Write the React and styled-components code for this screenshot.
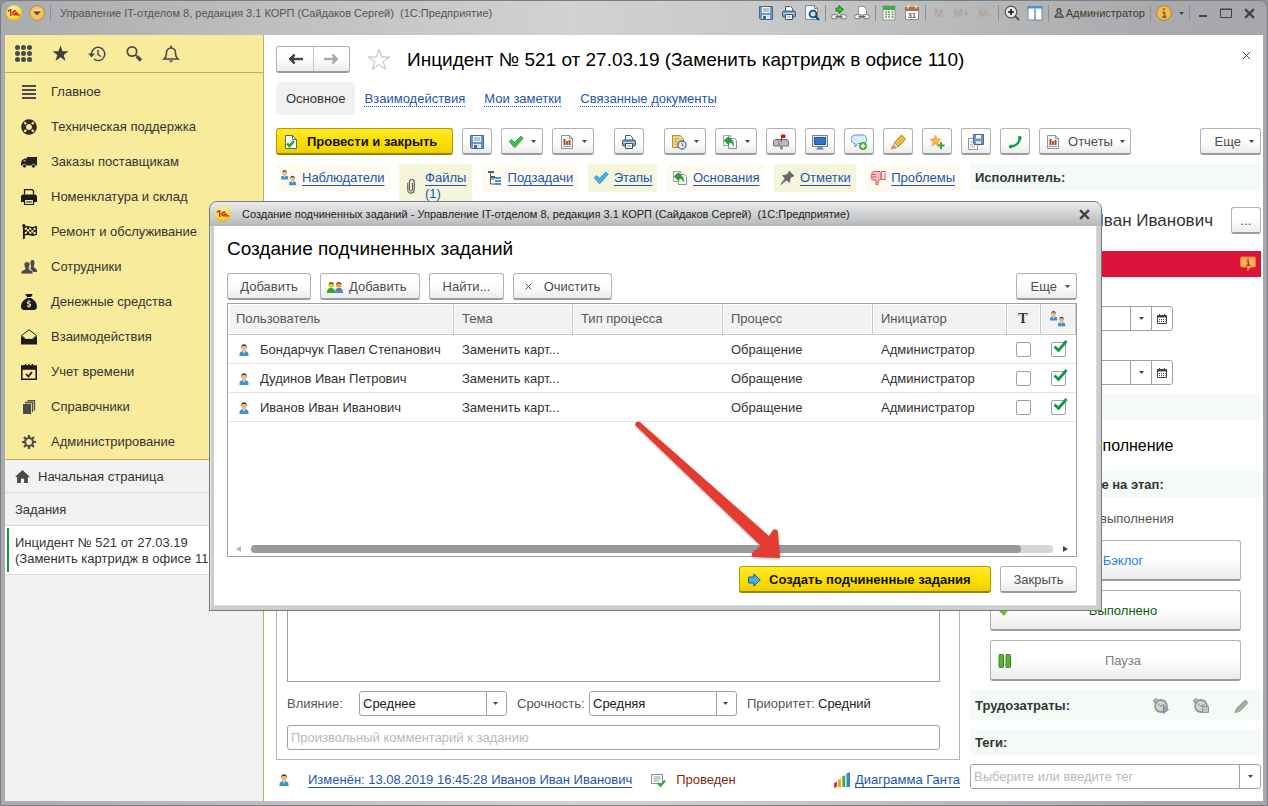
import React from "react";
import styled, { createGlobalStyle, css } from "styled-components";
import { FaLifeRing, FaFlagCheckered } from "react-icons/fa";
import { FaSackDollar } from "react-icons/fa6";

const GlobalStyle = createGlobalStyle`
  * {
    box-sizing: border-box;
  }
  body {
    margin: 0;
    background: #8d9093;
    color: #333;
    font-family: "Liberation Sans", Arial, sans-serif;
    font-size: 13px;
    line-height: 16px;
  }
  button,
  input,
  select,
  textarea {
    font: inherit;
    color: inherit;
    margin: 0;
  }
  h1,
  h2,
  p {
    margin: 0;
    font-weight: normal;
  }
  svg {
    display: block;
    flex: none;
  }
`;

/* ---------- icons ---------- */

const Icon = ({ size = 16, box = 16, children }) => (
  <svg width={size} height={size} viewBox={`0 0 ${box} ${box}`} fill="none" aria-hidden="true">
    {children}
  </svg>
);

const Logo = () => (
  <svg width="16" height="16" viewBox="0 0 16 16" aria-hidden="true">
    <defs>
      <radialGradient id="logo" cx="0.45" cy="0.3" r="0.7">
        <stop offset="0" stopColor="#fffbb0" />
        <stop offset="0.7" stopColor="#fbe32c" />
        <stop offset="1" stopColor="#e0b21a" />
      </radialGradient>
    </defs>
    <circle cx="8" cy="8" r="7.7" fill="url(#logo)" />
    <path d="M1.8 6.4L3.6 5h1.2v6M10.3 6.6A2 2 0 1 0 8.3 9.9H14M8.3 8.3H12" stroke="#d8151b" strokeWidth="1.4" fill="none" />
  </svg>
);

const DropBall = () => (
  <svg width="16" height="16" viewBox="0 0 16 16" aria-hidden="true">
    <circle cx="8" cy="8" r="7.4" fill="#f6c062" stroke="#b98a45" />
    <path d="M3 6a5.5 4 0 0 1 10 0z" fill="#fbd995" />
    <path d="M4.3 6.6h7.4L8 10.4z" fill="#5a4a36" />
  </svg>
);

const Caret = ({ color = "#444" }) => (
  <svg width="5" height="3" viewBox="0 0 5 3" aria-hidden="true">
    <path d="M0 0h5L2.5 3z" fill={color} />
  </svg>
);

const FloppyIcon = () => (
  <Icon>
    <path d="M1.5 1.5h13v13h-12l-1-1z" fill="#6f97c1" stroke="#44688f" />
    <path d="M4 2h8v6H4z" fill="#eef4fa" />
    <path d="M5 4h6M5 6h6" stroke="#7b93ad" />
    <path d="M4 10h8v4H4z" fill="#dfe5ea" />
    <path d="M5 11h3v3H5z" fill="#43678e" />
  </Icon>
);

const PrinterIcon = () => (
  <Icon>
    <path d="M4.5 6V1.5h5l2 2V6" fill="#fff" stroke="#3d5f84" />
    <rect x="1.5" y="6" width="13" height="6" rx="1.5" fill="#7d9cbd" stroke="#355778" />
    <path d="M2 8.500h12" stroke="#c2d3e3" />
    <path d="M4.5 9.5h7v5h-7z" fill="#fff" stroke="#355778" />
    <path d="M6 12h4" stroke="#7b93ad" />
  </Icon>
);

const PreviewIcon = () => (
  <Icon>
    <path d="M1.5.5h9l3 3v11h-12z" fill="#f4f7fa" stroke="#7f8d99" />
    <path d="M10.5.5v3h3" stroke="#7f8d99" />
    <circle cx="9" cy="9" r="3.4" fill="#cfe3ef" stroke="#0f5079" strokeWidth="1.8" />
    <path d="M11.5 11.5L15 15" stroke="#0f5079" strokeWidth="2.2" />
  </Icon>
);

const ChainIcon = ({ arrow }) => (
  <Icon>
    {arrow ? (
      <path d="M5 3h3V.5L12.500 4.500 8 8.500V6H5z" fill="#3bbf2e" stroke="#1d7d18" />
    ) : (
      <path d="M4.5 9V1.5h5l3 3V9" fill="#fff" stroke="#8a949c" />
    )}
    <rect x=".7" y="9.7" width="6" height="4" rx="1.5" fill="#f4f4f4" stroke="#777" />
    <rect x="9.3" y="9.7" width="6" height="4" rx="1.5" fill="#f4f4f4" stroke="#777" />
    <path d="M4.5 11.7h7" stroke="#666" strokeWidth="1.5" />
  </Icon>
);

const CalcIcon = () => (
  <Icon>
    <path d="M2 1h12v14H2z" fill="#f4f6f4" stroke="#8a998a" />
    <path d="M2 1h12v4H2z" fill="#3fae49" />
    <path d="M4 7h2M7 7h2M4 9.5h2M7 9.5h2M4 12h2M7 12h2" stroke="#7d8f7d" strokeWidth="1.5" />
    <path d="M10.5 7h2M10.5 9.5h2" stroke="#3fae49" strokeWidth="1.5" />
    <path d="M10.5 12h2" stroke="#d44" strokeWidth="1.5" />
  </Icon>
);

const CalendarIcon = () => (
  <Icon>
    <path d="M1.5 2.5h13v12h-13z" fill="#fff" stroke="#8a8a95" />
    <path d="M1 2h14v4H1z" fill="#bb6a35" />
    <path d="M4 .5v3M12 .5v3" stroke="#eed" strokeWidth="1.5" />
    <text x="8" y="13" textAnchor="middle" fontSize="7" fontWeight="bold" fill="#556">31</text>
  </Icon>
);

const ZoomPlusIcon = () => (
  <Icon>
    <circle cx="7" cy="7" r="5.8" fill="#e6e8ea" stroke="#555" strokeWidth="1.2" />
    <path d="M4 7h6M7 4v6" stroke="#111" strokeWidth="1.6" />
    <path d="M11 11l4 4" stroke="#555" strokeWidth="2" />
  </Icon>
);

const ColumnsIcon = () => (
  <Icon>
    <path d="M1 2h14v13H1z" fill="#fff" stroke="#7a8896" />
    <path d="M.5 1h15v2.500H.5z" fill="#3c94e0" />
    <path d="M8 4v11" stroke="#7a8896" strokeWidth="1.5" />
  </Icon>
);

const UserOutline = () => (
  <Icon size={10} box={10}>
    <path d="M5 .6c2.7 0 2.2 3.4 1 4.6 0 1.3 3 1 3 4H1c0-3 3-2.7 3-4C2.8 4 2.3.6 5 .6z" fill="#9a9a9a" stroke="#444" strokeWidth="1.3" />
  </Icon>
);

const InfoBall = () => (
  <Icon>
    <circle cx="8" cy="8" r="7.4" fill="#f4b84f" stroke="#b98328" />
    <path d="M8 3.2v1.900M6.5 7.300h2v4.500M6.3 12h4" stroke="#6b675c" strokeWidth="1.8" />
  </Icon>
);

const DocCheckIcon = () => (
  <Icon>
    <path d="M2.5 1.500h7l4 4v9h-11z" fill="#fff" stroke="#4a6a86" />
    <path d="M9.500 1.500v4h4" stroke="#4a6a86" />
    <path d="M4 9.500l2.500 2.500 4.500-5" stroke="#2fa332" strokeWidth="2.6" />
  </Icon>
);

const CheckPath = "M1.5 8.5L4 6.2l3.300 3.300L14.5 2.5l2.5 2.300L7.500 15.500z";

const GreenCheck = () => (
  <Icon box={18}>
    <path d={CheckPath} fill="#3fc04b" stroke="#25913a" />
  </Icon>
);

const BlueCheck = () => (
  <Icon box={18}>
    <path d={CheckPath} fill="#3fb3ef" stroke="#1f8bcb" />
  </Icon>
);

const ReportIcon = () => (
  <Icon>
    <path d="M2.5 1.500h8l3 3v10h-11z" fill="#f8fafc" stroke="#8497a9" />
    <path d="M10.500 1.500v3h3" stroke="#8497a9" />
    <path d="M5.500 5v6M10.500 6v5" stroke="#dd2c22" strokeWidth="2" />
    <path d="M8 7v4" stroke="#31a038" strokeWidth="2" />
    <path d="M4 12.500h8" stroke="#999" />
  </Icon>
);

const DocClockIcon = () => (
  <Icon>
    <path d="M1.5 1.500h8l3 3v9h-11z" fill="#f2d489" stroke="#b8903f" />
    <path d="M3 5h5M3 7.500h4M3 10h3" stroke="#c9a454" />
    <circle cx="11" cy="11" r="4" fill="#eaf2fa" stroke="#47719b" strokeWidth="1.3" />
    <path d="M11 8.500V11l2 1" stroke="#d33" />
  </Icon>
);

const BasisIcon = () => (
  <Icon>
    <path d="M1.5 1.500h7v10h-7z" fill="#f6f8fa" stroke="#9aa7b3" />
    <path d="M6.5 4.500h6l2 2v8h-8z" fill="#f2f6fa" stroke="#8094a6" />
    <path d="M2 6.500l5-4v2.200c3 0 4.500 3 4.500 6.800-1-2.500-2.500-3-4.500-3v2.300z" fill="#2f9e35" stroke="#1c7424" strokeWidth=".6" />
  </Icon>
);

const MailboxIcon = () => (
  <Icon>
    <path d="M.5 12V8A2.500 2.500 0 0 1 3 5.500h10A2.500 2.500 0 0 1 15.500 8v4z" fill="#b8bdc1" stroke="#6f7478" />
    <path d="M6 12V8a2.500 2.500 0 0 0-2.500-2.500" stroke="#6f7478" />
    <path d="M7 12h3v3.500H7z" fill="#8d9296" />
    <path d="M8.500 8V1h3.500v2.500H9" fill="#e01b1b" stroke="#c31414" />
  </Icon>
);

const MonitorIcon = () => (
  <Icon>
    <path d="M.5 1.500h15v11H.5z" fill="#e6eaee" stroke="#74808c" />
    <path d="M2.500 3.500h11v7h-11z" fill="#2f74c9" stroke="#1f549a" />
    <path d="M6 13h4v1.500H6zM4 15h8" fill="#999" stroke="#74808c" />
  </Icon>
);

const ChatPlusIcon = () => (
  <Icon>
    <path d="M4.500 1h7a3.800 3.800 0 0 1 0 8.500H7L4 13V9.500A4 4 0 0 1 4.500 1z" fill="#d9ecfa" stroke="#4f94cc" />
    <circle cx="12" cy="12" r="3.700" fill="#5cb531" stroke="#3e8a1d" strokeWidth=".6" />
    <path d="M12 9.800v4.400M9.800 12h4.400" stroke="#fff" strokeWidth="1.3" />
  </Icon>
);

const MarkerIcon = () => (
  <Icon>
    <path d="M4.500 8.500l7-7.500 4 4-7 7.500z" fill="#f1bd3c" stroke="#a97722" />
    <path d="M4.500 8.500l4 4-2.500 1.300L3.200 11z" fill="#d9d9d9" stroke="#8d8d8d" strokeWidth=".7" />
    <path d="M3.200 11.300L5.700 14 1 15z" fill="#e3a52e" stroke="#a97722" strokeWidth=".6" />
  </Icon>
);

const StarPlusIcon = () => (
  <Icon>
    <path d="M6.500 1l1.600 3.800 4.100.4-3.100 2.700.9 4.100-3.500-2.200L3 12l.9-4.100L.8 5.200l4.100-.4z" fill="#f7b24c" stroke="#e69a31" strokeWidth=".6" />
    <path d="M12 8v7M8.500 11.500h7" stroke="#3da62b" strokeWidth="2" />
  </Icon>
);

const CopySaveIcon = () => (
  <Icon>
    <path d="M.5 4.500h9v11h-9z" fill="#fff" stroke="#8497a9" />
    <path d="M2 8h3M2 10.500h3M2 13h5" stroke="#9fb0bf" />
    <path d="M5.500.5h10v10h-9l-1-1z" fill="#6c96c3" stroke="#44688f" />
    <path d="M8 1h5v3.500H8z" fill="#eef4fa" />
    <path d="M8 7h5v3H8z" fill="#d5dde4" />
  </Icon>
);

const PhoneIcon = () => (
  <Icon>
    <path d="M13 3.500C13 8 9 12.500 3.500 12.500" stroke="#0b9a4a" strokeWidth="2.2" />
    <path d="M11 2.500q2.500-1 3.500.5l-.3 3-2.700.200zM2 12.700q0-1.500 1.500-2h2l.7 2.300q-2 1.800-4.200 1z" fill="#0b9a4a" />
  </Icon>
);

const PersonShape = ({ x = 0, y = 0 }) => (
  <>
    <path d={`M${x} ${y + 12}v-2c0-2 2-3 4.500-3s4.500 1 4.500 3v2z`} fill="#3b93c9" />
    <path d={`M${x + 3.5} ${y + 7}h2l-1 3z`} fill="#fff" />
    <ellipse cx={x + 4.5} cy={y + 4} rx="2.6" ry="3.4" fill="#eebb7d" />
    <path d={`M${x + 1.7} ${y + 4.2}C${x + 1} ${y - 1.2} ${x + 8} ${y - 1.2} ${x + 7.3} ${y + 4.2}L${x + 6.3} ${y + 2}H${x + 2.7}z`} fill="#4e3a28" />
  </>
);

const PersonIcon = () => (
  <Icon size={12} box={12}>
    <PersonShape x={1.5} y={0} />
  </Icon>
);

const PeopleIcon = () => (
  <svg width="16" height="16" viewBox="0 0 20 20" aria-hidden="true">
    <PersonShape x={0} y={0} />
    <PersonShape x={10} y={7} />
  </svg>
);

const GreenPeopleIcon = () => (
  <svg width="16" height="12" viewBox="0 0 16 12" aria-hidden="true">
    <path d="M0 12c0-4 1.500-5 4-5s4 1 4 5z" fill="#35a52f" />
    <path d="M8 12c0-4 1.500-5 4-5s4 1 4 5z" fill="#3a93dc" />
    <path d="M10.500 7h3L12 11z" fill="#e8432c" />
    <circle cx="4.300" cy="3.800" r="2.900" fill="#e9c328" />
    <circle cx="11.800" cy="3.800" r="2.900" fill="#eaa046" />
    <path d="M1.500 3.500C2 0 6.500 0 7 3.500 5.500 2 3 2 1.500 3.500zM9 3.500c.5-3.500 5-3.500 5.500 0-1.500-1.500-4-1.500-5.500 0z" fill="#6d4a22" />
  </svg>
);

const ClipIcon = () => (
  <svg width="8" height="16" viewBox="0 0 8 16" fill="none" aria-hidden="true">
    <path d="M5.500 5v6.500a1.500 1.500 0 0 1-3 0V3.800a2.300 2.300 0 0 1 4.700 0V12a3.200 3.200 0 0 1-6.400 0V5" stroke="#555" strokeWidth="1.1" />
  </svg>
);

const TreeIcon = () => (
  <Icon>
    <path d="M1 1h6v2H1zM3 6h5v2H3z" fill="#4b5f70" />
    <path d="M3.500 3v11H8M3.500 9h4" stroke="#4b5f70" />
    <path d="M8 7h6v2H8zM8 10h6v2H8zM8 13h6v2H8z" fill="#4e93c6" />
  </Icon>
);

const PinIcon = () => (
  <Icon>
    <path d="M10 1l5 5-2 .5L11 8.500l-.5 4-3-2.500L2 14.500 6 8.500 3.500 5.500l4-.5L9.500 3z" fill="#6a6a6a" stroke="#4c4c4c" strokeWidth=".6" />
  </Icon>
);

const ThumbDownIcon = () => (
  <Icon>
    <path d="M3.500 1.500H10l1 1v6.500l-3 2v3.500H6V10H2.500L1 8.500 2 7 1 6l1-1.500-.5-1.500z" fill="#f8bcc0" stroke="#e0575f" />
    <path d="M2 4.500h4M2 7h4" stroke="#e0575f" />
    <path d="M11.500 1.500H15v8h-3.500z" fill="#fff" stroke="#e0575f" />
  </Icon>
);

const WarnBubble = () => (
  <Icon>
    <path d="M2 1h12q1.500 0 1.500 1.500v7Q15.500 11 14 11h-3.500L7.500 15v-4H2Q.5 11 .5 9.500v-7Q.5 1 2 1z" fill="#f9ae58" stroke="#e58325" />
    <path d="M8 2.500V4M6.500 5.500h2V9M6.300 9.200h4" stroke="#a8431a" strokeWidth="1.4" />
  </Icon>
);

const SmallCalendar = () => (
  <svg width="10" height="10" viewBox="0 0 10 10" fill="none" aria-hidden="true">
    <path d="M.5 2h9v7.500h-9z" stroke="#444" />
    <path d="M.5 1.500h9v1.500h-9zM2.500 0v2M7.500 0v2" fill="#444" stroke="#444" />
    <path d="M2 5.500h6.500M2 7.500h6.500" stroke="#444" strokeDasharray="1 1" />
  </svg>
);

const PauseIcon = () => (
  <svg width="14" height="14" viewBox="0 0 14 14" aria-hidden="true">
    <rect x="1" y=".5" width="4.500" height="13" rx="1" fill="#5ab534" stroke="#368420" />
    <rect x="8" y=".5" width="4.500" height="13" rx="1" fill="#5ab534" stroke="#368420" />
  </svg>
);

const DoneIcon = () => (
  <Icon size={12} box={14}>
    <path d="M1 6l3-3 3 3 4-5 2 2-6 9z" fill="#6cc616" stroke="#4f9f10" />
  </Icon>
);

const ClockIcon = ({ stop }) => (
  <Icon>
    <circle cx="3" cy="3" r="2.300" fill="#b9bab8" stroke="#999" />
    <circle cx="8" cy="8" r="6" fill="#d2d2d0" stroke="#989898" strokeWidth="1.8" />
    <path d="M5 5.500L8 8.500l3.500-2.500" stroke="#b06a6a" />
    {stop ? (
      <path d="M9.500 8.500h6v6h-6z" fill="#b4c2ce" stroke="#8497a7" />
    ) : (
      <path d="M10.500 7.500l5 4-5 4z" fill="#8fa5b8" stroke="#768b9e" />
    )}
  </Icon>
);

const PencilIcon = () => (
  <Icon>
    <path d="M2 14.500l1.500-4L11 3l3 3-7.500 7.500z" fill="#9ab59c" stroke="#8b9e8d" />
    <path d="M11 3l1.500-1.500 3 3L14 6z" fill="#a0a6ad" />
    <path d="M2 14.500l1.500-4 3 3z" fill="#c4a38c" />
  </Icon>
);

const ListCheckIcon = () => (
  <Icon>
    <path d="M1.500 2.500h11v9h-11z" fill="#fff" stroke="#7f8f9c" />
    <path d="M3.500 5h7M3.500 7h7M3.500 9h5" stroke="#8b9aa7" />
    <path d="M8 11l2.500 3L15 8.500" stroke="#36a838" strokeWidth="2" />
  </Icon>
);

const GanttIcon = () => (
  <Icon>
    <path d="M0 11l3-1.500V15l-3 1z" fill="#e23b2a" />
    <path d="M4 8l3-1.500V15H4z" fill="#f0a21f" />
    <path d="M8.300 4.500l3-1.500v12h-3z" fill="#3fae3a" />
    <path d="M12.500 1.500L16 0v15h-3.500z" fill="#3c83cf" />
  </Icon>
);

const BlueArrow = () => (
  <svg width="13" height="14" viewBox="0 0 13 14" aria-hidden="true">
    <path d="M.6 4h5.200V.9L12.200 7l-6.400 6.100V10H.6z" fill="#42aef0" stroke="#1d5f96" />
  </svg>
);

const GridIcon = () => (
  <Icon size={17} box={17}>
    {[2.500, 8.500, 14.500].map((y) => [2.500, 8.500, 14.500].map((x) => <circle key={`${x}-${y}`} cx={x} cy={y} r="2.500" fill="#4a4a4a" />))}
  </Icon>
);

const StarIcon = () => (
  <Icon size={17} box={17}>
    <path d="M8.500.5l2 5.700h6l-4.800 3.700 1.800 6-5-3.600-5 3.600 1.800-6L.5 6.200h6z" fill="#3f3f3f" />
  </Icon>
);

const HistoryIcon = () => (
  <Icon size={18} box={18}>
    <path d="M3.500 9a6.600 6.600 0 1 1 2.300 5" stroke="#4a4a4a" strokeWidth="1.5" />
    <path d="M0 8.500h7l-3.500 4z" fill="#4a4a4a" />
    <path d="M10 5v4.500l3 2" stroke="#4a4a4a" strokeWidth="1.5" />
  </Icon>
);

const SearchIcon = () => (
  <Icon size={18} box={18}>
    <circle cx="7" cy="6.500" r="4.700" stroke="#4a4a4a" strokeWidth="1.7" />
    <path d="M10.500 10l1.500 1.500" stroke="#4a4a4a" strokeWidth="1.7" />
    <path d="M12 11.500l4 4" stroke="#4a4a4a" strokeWidth="3.4" />
  </Icon>
);

const BellIcon = () => (
  <Icon size={18} box={18}>
    <path d="M2 14c2-1.500 2.500-3 2.500-6A4.500 4.500 0 0 1 9 3a4.500 4.500 0 0 1 4.500 5c0 3 .5 4.500 2.500 6z" stroke="#4a4a4a" strokeWidth="1.5" />
    <path d="M9 .8v2" stroke="#4a4a4a" strokeWidth="2" />
    <path d="M6.500 15.500h5L9 17.500z" fill="#4a4a4a" />
  </Icon>
);

const LinesIcon = () => (
  <Icon size={14} box={14}>
    <path d="M0 1h14M0 5h14M0 9h14M0 13h14" stroke="#4a4a4a" strokeWidth="2" />
  </Icon>
);

const TruckIcon = () => (
  <Icon>
    <path d="M6 3h10v8.500H0V9l1-3 3-1.500h2z" fill="#222" />
    <path d="M1.800 7l2.500-1v1.500z" fill="#f9eb9c" />
    <circle cx="3.500" cy="12" r="1.900" fill="#222" stroke="#f9eb9c" strokeWidth=".6" />
    <circle cx="12.500" cy="12" r="1.900" fill="#222" stroke="#f9eb9c" strokeWidth=".6" />
  </Icon>
);

const DarkPrinter = () => (
  <Icon>
    <path d="M3.500 5.500v-5H11l1.500 1.500v3.500" stroke="#1b1b1b" strokeWidth="1.3" />
    <path d="M1.500 5.500h13L16 7v6h-3v-2H3v2H0V7z" fill="#1b1b1b" />
    <path d="M3.500 10.500h9v5h-9z" fill="#f9eb9c" stroke="#1b1b1b" strokeWidth="1.2" />
    <path d="M5 13h6" stroke="#1b1b1b" />
  </Icon>
);

const StaffIcon = () => (
  <Icon>
    <path d="M9 9c2-.5 1-1.500.6-3C9 3.500 9.500 1 11.500 1S14 3.500 13 6.500c-.5 1.500 0 2 1 2.500s2 1.500 2 4h-4z" fill="#4a4a4a" />
    <path d="M0 15c0-3.500 1.500-3.500 3.500-4.500 1-.5.500-1.500 0-2.500C2.500 5 3 2.800 6 2.800S9.500 5 8.500 8c-.5 1-1 2 0 2.500 2 1 3.500 1 3.500 4.500z" fill="#4a4a4a" stroke="#f9eb9c" strokeWidth=".8" />
  </Icon>
);

const EnvelopeIcon = () => (
  <Icon>
    <path d="M.5 6.500L8 .8l7.500 5.700L11 10.500H5z" stroke="#1b1b1b" />
    <path d="M0 7l5.500 4L8 9.500l2.500 1.500L16 7v8.500H0z" fill="#1b1b1b" />
  </Icon>
);

const CalendarCheck = () => (
  <Icon>
    <path d="M.8 2.500h14.400v12.700H.8z" stroke="#1b1b1b" strokeWidth="1.6" />
    <path d="M1 2h14v3H1zM4.500 0v3M8 0v3M11.500 0v3" fill="#1b1b1b" stroke="#1b1b1b" strokeWidth="1.3" />
    <path d="M5 10l2.500 2.500L11 8" stroke="#1b1b1b" strokeWidth="1.7" />
  </Icon>
);

const BooksIcon = () => (
  <Icon size={14} box={14}>
    <path d="M1 4h8v10H1z" fill="#4a4a4a" />
    <path d="M3 2.500h7.500V12M5.500.7h7V10.500" stroke="#4a4a4a" strokeWidth="1.3" />
  </Icon>
);

const GearIcon = () => (
  <Icon size={14} box={14}>
    <path d="M7 0v14M0 7h14M2 2l10 10M12 2L2 12" stroke="#4a4a4a" strokeWidth="2.2" />
    <circle cx="7" cy="7" r="3.900" fill="#f9eb9c" stroke="#4a4a4a" strokeWidth="2" />
  </Icon>
);

const HomeIcon = () => (
  <Icon size={15} box={14}>
    <path d="M7 1l7 6.500h-2V13H8.500V9h-3v4H2V7.500H0z" fill="#4a4a4a" />
  </Icon>
);

const StarOutline = () => (
  <Icon size={24} box={24}>
    <path d="M12 1.500l2.600 7.500h8l-6.400 4.700 2.400 7.600L12 16.700l-6.600 4.600 2.400-7.600L1.400 9h8z" stroke="#b4bac0" />
  </Icon>
);

const LongArrow = ({ back, color }) => (
  <svg width="15" height="10" viewBox="0 0 15 10" fill="none" aria-hidden="true">
    <path d={back ? "M15 5H3" : "M0 5h12"} stroke={color} strokeWidth="2.4" />
    <path d={back ? "M6 0L1 5l5 5 .7-1.500L4.500 5l2.200-3.500z" : "M9 0l5 5-5 5-.7-1.500L10.500 5 8.300 1.500z"} fill={color} stroke={color} />
  </svg>
);

const CrossIcon = ({ size = 9, width = 1, color = "#444" }) => (
  <svg width={size} height={size} viewBox="0 0 10 10" aria-hidden="true">
    <path d="M1 1l8 8M9 1L1 9" stroke={color} strokeWidth={width} />
  </svg>
);

/* ---------- shared parts ---------- */

const Button = styled.button`
  display: inline-flex;
  align-items: center;
  justify-content: ${(p) => p.$justify || "center"};
  gap: ${(p) => p.$gap || 8}px;
  flex: none;
  width: ${(p) => (p.$width ? `${p.$width}px` : "auto")};
  height: 27px;
  padding: 1px ${(p) => p.$pad || 0}px 0;
  border: 1px solid #b2b2b2;
  border-bottom: 2px solid #9c9c9c;
  border-radius: 3px;
  background: linear-gradient(#fff 45%, #ececec);
  color: #4d4d4d;
  font-size: 13px;
  white-space: nowrap;
  cursor: pointer;
  ${(p) =>
    p.$primary &&
    css`
      border-color: #b39b08;
      border-bottom-color: #97830a;
      background: linear-gradient(#ffe92e, #fddf00 50%, #eed000);
      color: #111;
      font-weight: bold;
    `}
`;

const DropButton = styled(Button).attrs({ $justify: "flex-start", $pad: 6, $gap: 7, $width: 42 })``;

const Link = styled.a`
  color: #2255b4;
  text-decoration: underline ${(p) => (p.$dotted ? "dotted" : "solid")};
  text-decoration-thickness: 1px;
  text-underline-offset: 3px;
  text-decoration-skip-ink: none;
`;

const Field = styled.input`
  width: 100%;
  min-width: 0;
  height: 25px;
  padding: 0 3px;
  border: 1px solid #a0a0a0;
  border-radius: 3px;
  background: #fff;
  &::placeholder {
    color: #b9b9b9;
    opacity: 1;
  }
`;

/* ---------- window ---------- */

const Window = styled.div`
  position: relative;
  display: flex;
  flex-direction: column;
  min-height: 100vh;
  padding: 0 4px 4px;
  border: 1px solid #7c7d80;
  border-radius: 8px 8px 0 0;
  background: linear-gradient(90deg, #a9abae, #b4b5b7 10%, #d2d2d2 45%, #c9c9c9 60%, #a9abae 90%, #a5a7aa);
`;

const TitleBar = styled.header`
  display: flex;
  align-items: center;
  height: 34px;
  padding: 0 6px 10px 1px;
  gap: 7px;
  font-size: 11px;
  color: #555;
`;

const TitleText = styled.span`
  flex: 1;
  margin-left: 4px;
  white-space: pre;
  overflow: hidden;
`;

const Tool = styled.button`
  display: flex;
  align-items: center;
  justify-content: center;
  gap: ${(p) => p.$gap || 2}px;
  flex: none;
  min-width: ${(p) => p.$width || 16}px;
  height: 20px;
  padding: 0;
  border: 0;
  background: none;
  color: ${(p) => (p.disabled ? "#b3a59c" : "#443a2c")};
  font-weight: ${(p) => (p.disabled ? "bold" : "normal")};
`;

const Divider = styled.span`
  width: 1px;
  height: 16px;
  flex: none;
  margin: 0 -2px;
  background: #8d8d90;
`;

const Frame = styled.div`
  display: flex;
  flex: 1;
`;

/* ---------- sidebar ---------- */

const Sidebar = styled.aside`
  display: flex;
  flex-direction: column;
  width: 259px;
  flex: none;
  border-right: 1px solid #bfae5d;
  background: #f2f2f2;
`;

const QuickBar = styled.div`
  display: flex;
  gap: 19px;
  height: 38px;
  padding: 0 9px;
  align-items: center;
  border-bottom: 1px solid #bfae5d;
  background: #f9eb9c;
`;

const QuickButton = styled.button`
  display: flex;
  justify-content: center;
  align-items: center;
  width: 18px;
  height: 18px;
  padding: 0;
  border: 0;
  background: none;
`;

const Menu = styled.nav`
  display: flex;
  flex-direction: column;
  padding-top: 1px;
  border-bottom: 1px solid #bfae5d;
  background: #f9eb9c;
`;

const MenuItem = styled.a`
  display: grid;
  grid-template-columns: 16px 1fr;
  align-items: center;
  justify-items: start;
  gap: 14px;
  height: 35px;
  padding-left: 16px;
  color: #333;
  text-decoration: none;
  svg {
    justify-self: center;
  }
`;

const OpenItem = styled.a`
  display: flex;
  align-items: center;
  gap: 8px;
  height: 33px;
  padding: 1px 10px 0;
  border-bottom: 1px solid #d5d5d5;
  color: #333;
  text-decoration: none;
`;

const CurrentItem = styled.a`
  display: block;
  padding: 2px 2px 2px;
  border-bottom: 1px solid #d5d5d5;
  background: #fff;
  color: #333;
  text-decoration: none;
  white-space: nowrap;
  overflow: hidden;
  span {
    display: block;
    padding: 7px 6px 5px;
    border-left: 2px solid #0b9a4a;
  }
`;

/* ---------- document ---------- */

const Main = styled.main`
  flex: 1;
  min-width: 0;
  display: flex;
  flex-direction: column;
  padding: 11px 2px 11px 12px;
  background: #fff;
`;

const HeadRow = styled.div`
  display: flex;
  align-items: center;
  height: 27px;
  padding-right: 8px;
`;

const History = styled.div`
  display: flex;
  height: 27px;
  border: 1px solid #b2b2b2;
  border-bottom: 2px solid #9c9c9c;
  border-radius: 3px;
  background: linear-gradient(#fff 45%, #ececec);
  button {
    display: flex;
    align-items: center;
    justify-content: center;
    width: 36px;
    padding: 0;
    border: 0;
    background: none;
  }
  button + button {
    border-left: 1px solid #c8c8c8;
  }
`;

const StarButton = styled.button`
  margin: 0 16px 0 17px;
  padding: 0;
  border: 0;
  background: none;
`;

const PageTitle = styled.h1`
  flex: 1;
  padding-top: 1px;
  color: #000;
  font-size: 19px;
  line-height: 24px;
`;

const PlainButton = styled.button`
  display: flex;
  align-self: ${(p) => (p.$top ? "flex-start" : "auto")};
  padding: ${(p) => (p.$top ? 5 : 2)}px 2px;
  border: 0;
  background: none;
`;

const Tabs = styled.nav`
  display: flex;
  align-items: center;
  gap: 19px;
  margin: 9px 0 13px;
`;

const ActiveTab = styled.span`
  display: flex;
  align-items: center;
  height: 33px;
  margin-right: -9px;
  padding: 0 9px 0 10px;
  border-radius: 5px;
  background: #f1f1f1;
`;

const Toolbar = styled.div`
  display: flex;
  align-items: center;
  gap: 9px;
`;

const Group = styled.div`
  display: flex;
  gap: 9px;
  margin-right: ${(p) => (p.$wide ? 11 : 0)}px;
`;

const Spacer = styled.span`
  flex: 1;
`;

const Columns = styled.div`
  display: grid;
  grid-template-columns: minmax(0, 1fr) 291px;
  gap: 10px;
  flex: 1;
  margin-top: 9px;
`;

const Work = styled.section`
  display: flex;
  flex-direction: column;
`;

const Chips = styled.div`
  display: flex;
  align-items: flex-start;
  justify-content: space-between;
`;

const Chip = styled.div`
  display: flex;
  align-items: ${(p) => (p.$tall ? "center" : "flex-start")};
  gap: ${(p) => (p.$tall ? 10 : 5)}px;
  padding: 6px 5px 6px ${(p) => (p.$tall ? 8 : 5)}px;
  background: ${(p) => (p.$green ? "#f5f5dc" : "#fffaf0")};
  a {
    width: ${(p) => (p.$tall ? "42px" : "auto")};
  }
`;

const Sheet = styled.div`
  display: flex;
  flex: 1;
  flex-direction: column;
  gap: 9px;
  margin-top: 10px;
  padding: 10px 19px 9px 10px;
  border: 1px solid #b5b5b5;
`;

const Description = styled.textarea`
  flex: 1;
  width: 100%;
  border: 1px solid #a0a0a0;
  resize: none;
`;

const Params = styled.div`
  display: flex;
  align-items: center;
  color: #555;
`;

const ParamLabel = styled.label`
  min-width: ${(p) => p.$width}px;
`;

const ParamValue = styled.span`
  color: #222;
`;

const Combo = styled.span`
  position: relative;
  display: block;
  width: 148px;
  margin-right: 10px;
  color: #222;
  select {
    display: block;
    width: 100%;
    height: 25px;
    padding: 0 3px;
    border: 1px solid #a0a0a0;
    border-radius: 3px;
    background: linear-gradient(#a0a0a0, #a0a0a0) right 19px top / 1px 100% no-repeat #fff;
    appearance: none;
  }
  svg {
    position: absolute;
    right: 9px;
    top: 11px;
    pointer-events: none;
  }
`;

const Footer = styled.footer`
  display: flex;
  align-items: center;
  gap: 18px;
  margin-top: 10px;
  padding-left: 2px;
  height: 20px;
`;

const FooterItem = styled.span`
  display: flex;
  align-items: center;
  gap: ${(p) => p.$gap}px;
  color: #7f2a08;
`;

/* ---------- right panel ---------- */

const Side = styled.section`
  display: flex;
  flex-direction: column;
`;

const Strip = styled.div`
  display: flex;
  align-items: center;
  gap: 24px;
  height: ${(p) => p.$height || 26}px;
  margin-top: ${(p) => p.$top || 0}px;
  padding: 1px 12px 0 5px;
  background: #f4fbf7;
  font-weight: bold;
`;

const Assignee = styled.div`
  display: flex;
  align-items: center;
  justify-content: flex-end;
  gap: 18px;
  margin: 17px 0;
  font-size: 17px;
`;

const Alert = styled.div`
  display: flex;
  justify-content: flex-end;
  align-items: center;
  height: 26px;
  padding-right: 5px;
  background: #dc143c;
`;

const DateBox = styled.div`
  display: grid;
  grid-template-columns: 1fr 21px 21px;
  width: 203px;
  height: 25px;
  margin-top: 29px;
  border: 1px solid #a0a0a0;
  border-radius: 3px;
  input {
    min-width: 0;
    padding: 0 3px;
    border: 0;
    background: none;
  }
  button {
    display: flex;
    align-items: center;
    justify-content: center;
    padding: 0;
    border: 0;
    border-left: 1px solid #a0a0a0;
    background: none;
  }
`;

const Stage = styled.p`
  margin: 15px 0 14px;
  color: #000;
  font-size: 16px;
  line-height: 22px;
  text-align: center;
`;

const StageNote = styled.p`
  margin: 14px 0 13px;
  color: #555;
  text-align: center;
`;

const StageButtons = styled.div`
  display: flex;
  flex-direction: column;
  gap: 9px;
  padding: 0 20px;
`;

const StageButton = styled.button`
  display: grid;
  grid-template-columns: 16px 1fr;
  align-items: center;
  height: 41px;
  padding: 1px 0 0 7px;
  border: 1px solid #b2b2b2;
  border-bottom: 2px solid #9c9c9c;
  border-radius: 3px;
  background: linear-gradient(#fff 45%, #ececec);
  color: ${(p) => p.$color};
  span {
    grid-column: 2;
    padding-right: 8px;
  }
`;

const TagBox = styled.div`
  display: flex;
  margin-top: 9px;
  border: 1px solid #a0a0a0;
  border-radius: 3px;
  input {
    border: 0;
    height: 23px;
  }
  button {
    display: flex;
    align-items: center;
    justify-content: center;
    width: 21px;
    flex: none;
    padding: 0;
    border: 0;
    border-left: 1px solid #a0a0a0;
    background: none;
  }
`;

/* ---------- dialog ---------- */

const Dialog = styled.section`
  position: absolute;
  left: 208px;
  top: 200px;
  width: 893px;
  padding: 0 4px 4px;
  border: 1px solid #77797c;
  border-radius: 8px 8px 0 0;
  background: #cbcdcf;
  box-shadow: inset 1px 0 #e4e5e6;
`;

const DialogBar = styled.header`
  display: flex;
  align-items: center;
  gap: 11px;
  height: 24px;
  margin: 0 -4px;
  padding: 0 9px 0 5px;
  border-radius: 7px 7px 0 0;
  background: linear-gradient(#ececec, #b5b7b9);
  color: #222;
  font-size: 11px;
  white-space: pre;
`;

const DialogBody = styled.div`
  padding: 11px 19px 12px 13px;
  border: 1px solid #d9dadb;
  border-width: 0 1px 1px 0;
  background: #fff;
`;

const DialogTitle = styled.h2`
  margin-bottom: 13px;
  color: #000;
  font-size: 19px;
  line-height: 23px;
`;

const TableBox = styled.div`
  display: flex;
  flex-direction: column;
  justify-content: space-between;
  min-height: 254px;
  margin: 3px 0 9px;
  border: 1px solid #a0a0a0;
`;

const Table = styled.table`
  width: 100%;
  table-layout: fixed;
  border-collapse: separate;
  border-spacing: 0;
  th {
    height: 31px;
    padding: 0 8px;
    border-right: 1px solid #c6c6c6;
    border-bottom: 1px solid #c6c6c6;
    background: #f2f2f2;
    box-shadow: inset 0 0 0 1px #fff;
    color: #555;
    font-weight: normal;
    text-align: left;
  }
  td {
    height: 29px;
    padding: 1px 8px 0;
    border-bottom: 1px solid #e2e2e2;
    white-space: nowrap;
    overflow: hidden;
  }
  th:nth-child(n + 6),
  td:nth-child(n + 6) {
    padding: 0 1px 0 0;
    text-align: center;
  }
  th svg {
    margin: 0 auto;
  }
`;

const Col = styled.col`
  width: ${(p) => p.$width}px;
`;

const UserCell = styled.span`
  display: flex;
  align-items: center;
  gap: 10px;
  padding-left: 2px;
`;

const SerifT = styled.span`
  color: #333;
  font: bold 14px "Liberation Serif", serif;
`;

const Tick = styled.label`
  position: relative;
  display: block;
  width: 15px;
  height: 15px;
  margin: 0 auto;
  input {
    display: block;
    width: 15px;
    height: 15px;
    border: 1px solid #a0a0a0;
    border-radius: 2px;
    background: #fff;
    appearance: none;
  }
  svg {
    position: absolute;
    left: 2px;
    top: -2px;
    pointer-events: none;
  }
`;

const Scroll = styled.div`
  display: flex;
  align-items: center;
  gap: 10px;
  height: 15px;
  padding: 0 8px;
`;

const Track = styled.div`
  flex: 1;
  height: 8px;
  border-radius: 4px;
  background: #d6d6d6;
`;

const Thumb = styled.div`
  width: 96%;
  height: 8px;
  border-radius: 4px;
  background: #9a9a9a;
`;

const DialogFooter = styled.div`
  display: flex;
  justify-content: flex-end;
  gap: 9px;
`;

const Pointer = styled.svg`
  position: absolute;
  left: 419px;
  top: 217px;
  pointer-events: none;
  filter: drop-shadow(0 1px 1px rgba(0, 0, 0, 0.3));
`;

const menu = [
  ["Главное", <LinesIcon />],
  ["Техническая поддержка", <FaLifeRing size={16} color="#2d2a20" />],
  ["Заказы поставщикам", <TruckIcon />],
  ["Номенклатура и склад", <DarkPrinter />],
  ["Ремонт и обслуживание", <FaFlagCheckered size={15} color="#1b1b1b" />],
  ["Сотрудники", <StaffIcon />],
  ["Денежные средства", <FaSackDollar size={16} color="#1b1b1b" />],
  ["Взаимодействия", <EnvelopeIcon />],
  ["Учет времени", <CalendarCheck />],
  ["Справочники", <BooksIcon />],
  ["Администрирование", <GearIcon />],
];

const users = ["Бондарчук Павел Степанович", "Дудинов Иван Петрович", "Иванов Иван Иванович"];

const Checkbox = ({ label, checked }) => (
  <Tick>
    <input type="checkbox" aria-label={label} defaultChecked={checked} />
    {checked && (
      <svg width="15" height="14" viewBox="0 0 15 14" fill="none" aria-hidden="true">
        <path d="M1.500 6.500l4 4L13.500 1" stroke="#0b9a4a" strokeWidth="2.8" />
      </svg>
    )}
  </Tick>
);

const CreateTasksDialog = () => (
  <Dialog role="dialog" aria-label="Создание подчиненных заданий">
    <DialogBar>
      <Logo />
      <span>Создание подчиненных заданий - Управление IT-отделом 8, редакция 3.1 КОРП (Сайдаков Сергей)  (1С:Предприятие)</span>
      <Spacer />
      <PlainButton aria-label="Закрыть окно">
        <CrossIcon size={11} width={2.2} />
      </PlainButton>
    </DialogBar>
    <DialogBody>
      <DialogTitle>Создание подчиненных заданий</DialogTitle>
      <Toolbar>
        <Button $width={84}>Добавить</Button>
        <Button $width={100} $gap={6} $justify="flex-start" $pad={6}>
          <GreenPeopleIcon />
          Добавить
        </Button>
        <Button $width={75}>Найти...</Button>
        <Button $width={99} $gap={12}>
          <CrossIcon size={7} width={1.3} />
          Очистить
        </Button>
        <Spacer />
        <Button $width={61} $justify="flex-end" $pad={6}>
          Еще
          <Caret />
        </Button>
      </Toolbar>
      <TableBox>
        <Table>
          <colgroup>
            <col />
            <Col $width={119} />
            <Col $width={150} />
            <Col $width={150} />
            <Col $width={134} />
            <Col $width={34} />
            <Col $width={35} />
          </colgroup>
          <thead>
            <tr>
              <th>Пользователь</th>
              <th>Тема</th>
              <th>Тип процесса</th>
              <th>Процесс</th>
              <th>Инициатор</th>
              <th>
                <SerifT>T</SerifT>
              </th>
              <th aria-label="Наблюдатели">
                <PeopleIcon />
              </th>
            </tr>
          </thead>
          <tbody>
            {users.map((user) => (
              <tr key={user}>
                <td>
                  <UserCell>
                    <PersonIcon />
                    {user}
                  </UserCell>
                </td>
                <td>Заменить карт...</td>
                <td />
                <td>Обращение</td>
                <td>Администратор</td>
                <td>
                  <Checkbox label={`T: ${user}`} />
                </td>
                <td>
                  <Checkbox label={`Наблюдатель: ${user}`} checked />
                </td>
              </tr>
            ))}
          </tbody>
        </Table>
        <Scroll>
          <svg width="5" height="6" viewBox="0 0 5 6" aria-hidden="true">
            <path d="M5 0v6L0 3z" fill="#b5b5b5" />
          </svg>
          <Track>
            <Thumb />
          </Track>
          <svg width="5" height="6" viewBox="0 0 5 6" aria-hidden="true">
            <path d="M0 0v6l5-3z" fill="#444" />
          </svg>
        </Scroll>
      </TableBox>
      <DialogFooter>
        <Button $primary $width={252} $justify="flex-start" $pad={8}>
          <BlueArrow />
          Создать подчиненные задания
        </Button>
        <Button $width={77}>Закрыть</Button>
      </DialogFooter>
    </DialogBody>
    <Pointer width="156" height="146" viewBox="0 0 156 146" aria-hidden="true">
      <path
        d="M7 7q-2-3 1-4t4 1L140 117l4-6q4-2 5 2l2 26-26-1q-4-1-1-5l8-6z"
        fill="#e53b30"
      />
    </Pointer>
  </Dialog>
);

const SidePanel = () => (
  <Side>
    <Strip>Исполнитель:</Strip>
    <Assignee>
      <span>Иванов Иван Иванович</span>
      <Button $width={30} aria-label="Выбрать исполнителя">
        ...
      </Button>
    </Assignee>
    <Alert>
      <WarnBubble />
    </Alert>
    <DateBox>
      <input aria-label="Начало" />
      <button aria-label="Выбрать начало">
        <Caret />
      </button>
      <button aria-label="Календарь начала">
        <SmallCalendar />
      </button>
    </DateBox>
    <DateBox>
      <input aria-label="Срок" />
      <button aria-label="Выбрать срок">
        <Caret />
      </button>
      <button aria-label="Календарь срока">
        <SmallCalendar />
      </button>
    </DateBox>
    <Strip $top={9}>Этап:</Strip>
    <Stage>На выполнение</Stage>
    <Strip>Переводить задание на этап:</Strip>
    <StageNote>Время выполнения</StageNote>
    <StageButtons>
      <StageButton $color="#1e83ee">
        <span>Бэклог</span>
      </StageButton>
      <StageButton $color="#0b5c0b">
        <DoneIcon />
        <span>Выполнено</span>
      </StageButton>
      <StageButton $color="#808080">
        <PauseIcon />
        <span>Пауза</span>
      </StageButton>
    </StageButtons>
    <Strip $height={30} $top={9}>
      Трудозатраты:
      <Spacer />
      <ClockIcon />
      <ClockIcon stop />
      <PencilIcon />
    </Strip>
    <Strip $top={9}>Теги:</Strip>
    <TagBox>
      <Field aria-label="Теги" placeholder="Выберите или введите тег" />
      <button aria-label="Список тегов">
        <Caret />
      </button>
    </TagBox>
  </Side>
);

const App = () => (
  <>
    <GlobalStyle />
    <Window>
      <TitleBar>
        <Logo />
        <DropBall />
        <Divider />
        <TitleText>Управление IT-отделом 8, редакция 3.1 КОРП (Сайдаков Сергей)  (1С:Предприятие)</TitleText>
        <Tool aria-label="Сохранить"><FloppyIcon /></Tool>
        <Tool aria-label="Печать"><PrinterIcon /></Tool>
        <Tool aria-label="Просмотр"><PreviewIcon /></Tool>
        <Divider />
        <Tool aria-label="Получить ссылку"><ChainIcon arrow /></Tool>
        <Tool aria-label="Перейти по ссылке"><ChainIcon /></Tool>
        <Divider />
        <Tool aria-label="Калькулятор"><CalcIcon /></Tool>
        <Tool aria-label="Календарь"><CalendarIcon /></Tool>
        <Divider />
        <Tool disabled>M</Tool>
        <Tool disabled>M+</Tool>
        <Tool disabled>M-</Tool>
        <Divider />
        <Tool aria-label="Масштаб"><ZoomPlusIcon /></Tool>
        <Tool aria-label="Панели"><ColumnsIcon /></Tool>
        <Divider />
        <Tool>
          <UserOutline />
          Администратор
        </Tool>
        <Divider />
        <Tool aria-label="Справка" $width={28} $gap={7}>
          <InfoBall />
          <Caret />
        </Tool>
        <Divider />
        <Tool aria-label="Свернуть">
          <svg width="8" height="8" viewBox="0 0 8 8"><path d="M0 7h8" stroke="#444" strokeWidth="2" /></svg>
        </Tool>
        <Tool aria-label="Развернуть">
          <svg width="12" height="10" viewBox="0 0 12 10"><path d="M.5 1.500h11v8H.5zM0 1h12" fill="none" stroke="#444" /></svg>
        </Tool>
        <Tool aria-label="Закрыть программу">
          <CrossIcon size={11} width={2} />
        </Tool>
      </TitleBar>
      <Frame>
        <Sidebar>
          <QuickBar>
            <QuickButton aria-label="Разделы"><GridIcon /></QuickButton>
            <QuickButton aria-label="Избранное"><StarIcon /></QuickButton>
            <QuickButton aria-label="История"><HistoryIcon /></QuickButton>
            <QuickButton aria-label="Поиск"><SearchIcon /></QuickButton>
            <QuickButton aria-label="Оповещения"><BellIcon /></QuickButton>
          </QuickBar>
          <Menu>
            {menu.map(([label, icon]) => (
              <MenuItem href="#" key={label}>
                {icon}
                <span>{label}</span>
              </MenuItem>
            ))}
          </Menu>
          <OpenItem href="#">
            <HomeIcon />
            Начальная страница
          </OpenItem>
          <OpenItem href="#">Задания</OpenItem>
          <CurrentItem href="#">
            <span>
              Инцидент № 521 от 27.03.19
              <br />
              (Заменить картридж в офисе 110)
            </span>
          </CurrentItem>
        </Sidebar>
        <Main>
          <HeadRow>
            <History>
              <button aria-label="Назад"><LongArrow back color="#444" /></button>
              <button aria-label="Вперед"><LongArrow color="#aaa" /></button>
            </History>
            <StarButton aria-label="В избранное"><StarOutline /></StarButton>
            <PageTitle>Инцидент № 521 от 27.03.19 (Заменить картридж в офисе 110)</PageTitle>
            <PlainButton $top aria-label="Закрыть документ"><CrossIcon width={1.1} /></PlainButton>
          </HeadRow>
          <Tabs>
            <ActiveTab>Основное</ActiveTab>
            <Link $dotted href="#">Взаимодействия</Link>
            <Link $dotted href="#">Мои заметки</Link>
            <Link $dotted href="#">Связанные документы</Link>
          </Tabs>
          <Toolbar>
            <Group $wide>
              <Button $primary $width={177} $justify="flex-start" $pad={6}>
                <DocCheckIcon />
                Провести и закрыть
              </Button>
              <Button $width={30} aria-label="Записать"><FloppyIcon /></Button>
              <DropButton aria-label="Провести"><GreenCheck /><Caret /></DropButton>
              <DropButton aria-label="Отчет"><ReportIcon /><Caret /></DropButton>
            </Group>
            <Group $wide>
              <Button $width={30} aria-label="Печать документа"><PrinterIcon /></Button>
            </Group>
            <Group>
              <DropButton aria-label="Время"><DocClockIcon /><Caret /></DropButton>
              <DropButton aria-label="На основании"><BasisIcon /><Caret /></DropButton>
              <Button $width={30} aria-label="Почта"><MailboxIcon /></Button>
              <Button $width={30} aria-label="Компьютер"><MonitorIcon /></Button>
              <Button $width={30} aria-label="Обсуждение"><ChatPlusIcon /></Button>
              <Button $width={30} aria-label="Маркер"><MarkerIcon /></Button>
              <Button $width={30} aria-label="Добавить отметку"><StarPlusIcon /></Button>
              <Button $width={30} aria-label="Сохранить копию"><CopySaveIcon /></Button>
              <Button $width={30} aria-label="Позвонить"><PhoneIcon /></Button>
              <Button $width={92} $gap={7}><ReportIcon />Отчеты<Caret /></Button>
            </Group>
            <Spacer />
            <Button $width={61} $justify="flex-end" $pad={6}>Еще<Caret /></Button>
          </Toolbar>
          <Columns>
            <Work>
              <Chips>
                <Chip><PeopleIcon /><Link href="#">Наблюдатели</Link></Chip>
                <Chip $green $tall><ClipIcon /><Link href="#">Файлы (1)</Link></Chip>
                <Chip><TreeIcon /><Link href="#">Подзадачи</Link></Chip>
                <Chip $green><BlueCheck /><Link href="#">Этапы</Link></Chip>
                <Chip><BasisIcon /><Link href="#">Основания</Link></Chip>
                <Chip $green><PinIcon /><Link href="#">Отметки</Link></Chip>
                <Chip><ThumbDownIcon /><Link href="#">Проблемы</Link></Chip>
              </Chips>
              <Sheet>
                <Description aria-label="Описание" />
                <Params>
                  <ParamLabel $width={72} htmlFor="impact">Влияние:</ParamLabel>
                  <Combo>
                    <select id="impact"><option>Среднее</option></select>
                    <Caret />
                  </Combo>
                  <ParamLabel $width={72} htmlFor="urgency">Срочность:</ParamLabel>
                  <Combo>
                    <select id="urgency"><option>Средняя</option></select>
                    <Caret />
                  </Combo>
                  <ParamLabel as="span" $width={71}>Приоритет:</ParamLabel>
                  <ParamValue>Средний</ParamValue>
                </Params>
                <Field aria-label="Комментарий" placeholder="Произвольный комментарий к заданию" />
              </Sheet>
              <Footer>
                <PersonIcon />
                <Link href="#">Изменён: 13.08.2019 16:45:28 Иванов Иван Иванович</Link>
                <FooterItem $gap={10}>
                  <ListCheckIcon />
                  Проведен
                </FooterItem>
                <Spacer />
                <FooterItem $gap={5}>
                  <GanttIcon />
                  <Link href="#">Диаграмма Ганта</Link>
                </FooterItem>
              </Footer>
            </Work>
            <SidePanel />
          </Columns>
        </Main>
      </Frame>
      <CreateTasksDialog />
    </Window>
  </>
);

export default App;
